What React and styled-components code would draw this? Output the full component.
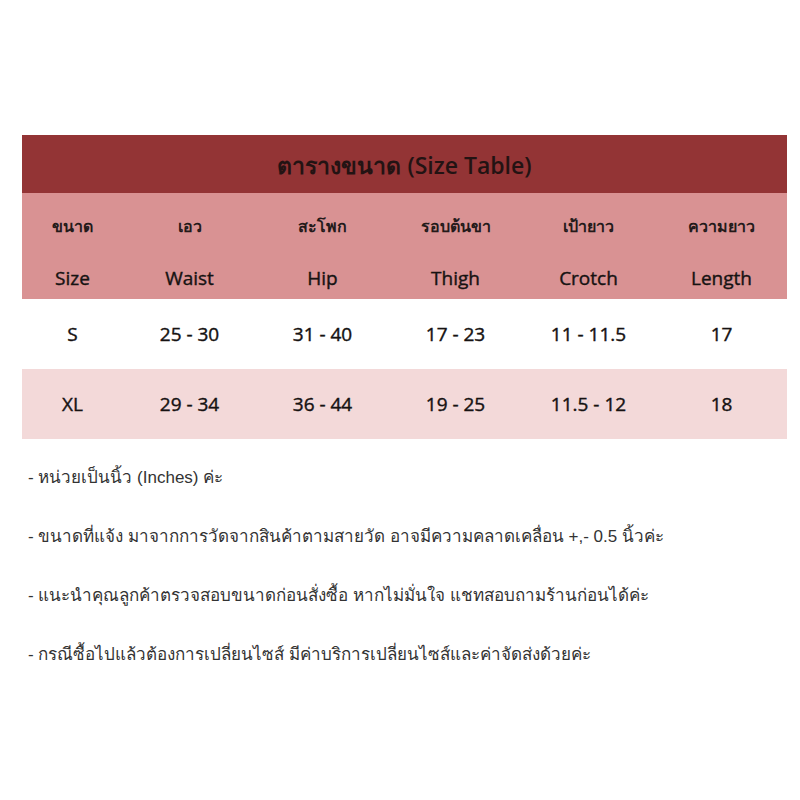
import React from 'react';
import styled, { createGlobalStyle } from 'styled-components';

const columns = [
  { th: 'ขนาด', en: 'Size' },
  { th: 'เอว', en: 'Waist' },
  { th: 'สะโพก', en: 'Hip' },
  { th: 'รอบต้นขา', en: 'Thigh' },
  { th: 'เป้ายาว', en: 'Crotch' },
  { th: 'ความยาว', en: 'Length' },
];

const rows = [
  ['S', '25 - 30', '31 - 40', '17 - 23', '11 - 11.5', '17'],
  ['XL', '29 - 34', '36 - 44', '19 - 25', '11.5 - 12', '18'],
];

const notes = [
  '- หน่วยเป็นนิ้ว (Inches) ค่ะ',
  '- ขนาดที่แจ้ง มาจากการวัดจากสินค้าตามสายวัด อาจมีความคลาดเคลื่อน +,- 0.5 นิ้วค่ะ',
  '- แนะนำคุณลูกค้าตรวจสอบขนาดก่อนสั่งซื้อ หากไม่มั่นใจ แชทสอบถามร้านก่อนได้ค่ะ',
  '- กรณีซื้อไปแล้วต้องการเปลี่ยนไซส์ มีค่าบริการเปลี่ยนไซส์และค่าจัดส่งด้วยค่ะ',
];

function App() {
  return (
    <>
      <GlobalStyle />
      <Page>
        <Table>
          <Title>ตารางขนาด (Size Table)</Title>
          <HeadBand>
            {columns.map(c => (
              <HeadCell key={c.en}>
                <ThaiLabel>{c.th}</ThaiLabel>
                <EnLabel>{c.en}</EnLabel>
              </HeadCell>
            ))}
          </HeadBand>
          {rows.map((row, i) => (
            <Row key={row[0]} $shaded={i % 2 === 1}>
              {row.map((v, j) => (
                <Cell key={j}>{v}</Cell>
              ))}
            </Row>
          ))}
        </Table>
        <Notes>
          {notes.map(n => (
            <Note key={n}>{n}</Note>
          ))}
        </Notes>
      </Page>
    </>
  );
}

const GlobalStyle = createGlobalStyle`
  html, body {
    margin: 0;
    padding: 0;
    background: #fff;
  }
  body {
    font-family: "Open Sans", "Noto Sans", sans-serif;
    color: #161212;
  }
`;

const Page = styled.div`
  width: 800px;
  height: 800px;
  padding: 135px 13px 0 22px;
  box-sizing: border-box;
`;

const Table = styled.div`
  width: 765px;
`;

const gridCols = `
  display: grid;
  grid-template-columns: 101px repeat(5, 133px);
`;

const Title = styled.div`
  height: 58px;
  background: #933435;
  display: flex;
  align-items: center;
  justify-content: center;
  font-size: 23px;
  font-weight: 600;
  color: #231313;
  padding-top: 4px;
  box-sizing: border-box;
`;

const HeadBand = styled.div`
  ${gridCols}
  height: 106px;
  background: #d99293;
`;

const HeadCell = styled.div`
  display: flex;
  flex-direction: column;
  align-items: center;
`;

const ThaiLabel = styled.div`
  margin-top: 20px;
  height: 26px;
  font-size: 16px;
  font-weight: 600;
  line-height: 26px;
  color: #241a1a;
`;

const EnLabel = styled.div`
  margin-top: 26px;
  height: 26px;
  font-size: 19px;
  line-height: 26px;
  -webkit-text-stroke: 0.4px currentColor;
`;

const Row = styled.div`
  ${gridCols}
  height: 70px;
  align-items: center;
  background: ${p => (p.$shaded ? '#f3d9d9' : '#ffffff')};
`;

const Cell = styled.div`
  text-align: center;
  font-size: 19px;
  -webkit-text-stroke: 0.4px currentColor;
`;

const Notes = styled.div`
  display: flex;
  flex-direction: column;
  gap: 34px;
  margin-top: 26px;
  padding-left: 6px;
`;

const Note = styled.div`
  font-family: "Liberation Sans", "Noto Sans", sans-serif;
  font-size: 17px;
  line-height: 25px;
  color: #333;
`;

export default App;
